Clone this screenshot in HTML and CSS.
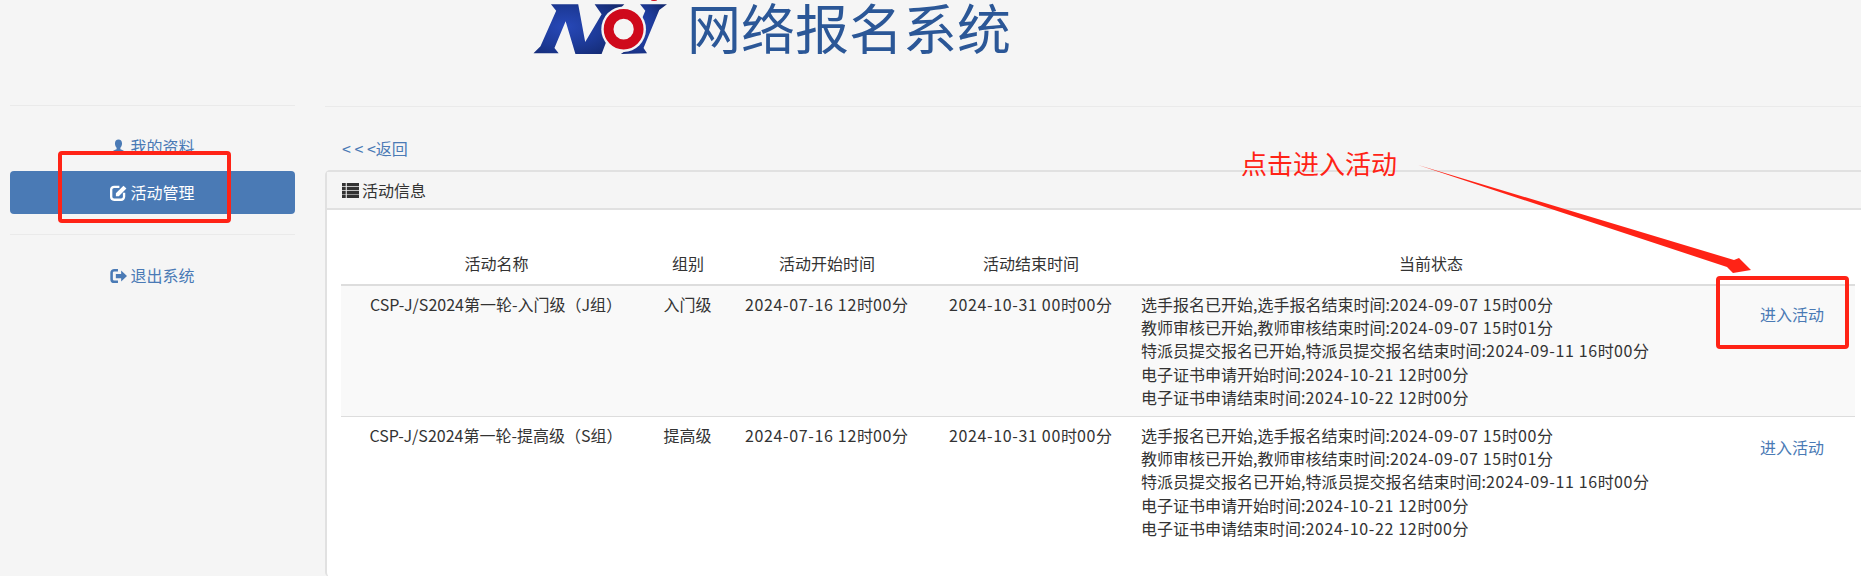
FILE: index.html
```html
<!DOCTYPE html>
<html lang="zh-CN">
<head>
<meta charset="utf-8">
<title>网络报名系统</title>
<link rel="stylesheet" href="styles.css">
</head>
<body>
<div class="app">
  <header class="header">
    <svg class="logo" viewBox="0 0 435 180" preserveAspectRatio="none" aria-label="NOI">
      <defs>
        <radialGradient id="blue" cx="0.35" cy="0.45" r="0.7">
          <stop offset="0" stop-color="#2748b8"/>
          <stop offset="0.55" stop-color="#1d3a98"/>
          <stop offset="1" stop-color="#142a72"/>
        </radialGradient>
      </defs>
      <polygon fill="url(#blue)" points="80,12 158,12 178,118 225,40 205,12 290,12 272,30 225,152 150,152 122,60 90,135 102,150 30,150 50,130 95,30"/>
      <polygon fill="url(#blue)" points="335,12 412,12 390,28 345,135 355,150 280,152 305,135 350,30"/>
      <circle cx="288" cy="82" r="64" fill="#f5f5f5"/>
      <circle cx="288" cy="82" r="43" fill="none" stroke="#cf0a1c" stroke-width="28"/>
      <ellipse cx="375" cy="0" rx="9" ry="3" fill="#cf0a1c"/>
    </svg>
    <h1 class="title">网络报名系统</h1>
  </header>

  <div class="layout">
    <aside class="sidebar">
      <hr class="rule">
      <nav class="nav nav-top">
        <a class="nav-item" href="#">
          <svg class="icon" viewBox="0 0 14 14.500"><path fill="currentColor" d="M7 0.500c2 0 3.200 1.500 3.200 3.600 0 1.600-.7 3-1.500 3.900v1.200c1.600.7 3.800 1.400 4.300 2.600.2.500.2 1.200.2 1.700H.8c0-.5 0-1.200.2-1.700.5-1.200 2.700-1.900 4.300-2.600V8c-.8-.9-1.500-2.300-1.500-3.900C3.800 2 5 .5 7 .5z"/></svg>
          <span>我的资料</span>
        </a>
        <a class="nav-item nav-active" href="#">
          <svg class="icon" viewBox="1 1.500 14.500 13.500"><path fill="none" stroke="currentColor" stroke-width="2" d="M9 3H4.500A2.500 2.500 0 0 0 2 5.500v6A2.500 2.500 0 0 0 4.500 14h6a2.500 2.500 0 0 0 2.500-2.500V8"/><path fill="currentColor" d="M6 8.500 12.500 2 15 4.500 8.500 11H6z"/></svg>
          <span>活动管理</span>
        </a>
      </nav>
      <hr class="rule rule-lower">
      <nav class="nav">
        <a class="nav-item" href="#">
          <svg class="icon" viewBox="0.500 1 16 14"><path fill="none" stroke="currentColor" stroke-width="2.400" d="M8 2.500H4.500a2.500 2.500 0 0 0-2.500 2.500v6a2.500 2.500 0 0 0 2.500 2.500H8"/><path fill="currentColor" d="M6 6h5V2.800L16.500 8 11 13.200V10H6z"/></svg>
          <span>退出系统</span>
        </a>
      </nav>
    </aside>

    <main class="main">
      <hr class="rule rule-main">
      <a class="back" href="#">&lt; &lt; &lt;返回</a>
      <section class="panel">
        <div class="panel-heading">
          <svg class="icon icon-dark" viewBox="0 0 16 14" preserveAspectRatio="none"><path fill="currentColor" d="M0 0h3.500v3H0zM4.500 0H16v3H4.500zM0 3.700h3.500v3H0zM4.500 3.700H16v3H4.500zM0 7.400h3.500v3H0zM4.500 7.400H16v3H4.500zM0 11h3.500v3H0zM4.500 11H16v3H4.500z"/></svg>
          <span>活动信息</span>
        </div>
        <div class="panel-body">
          <table class="table">
            <colgroup>
              <col class="c-name"><col class="c-group"><col class="c-start"><col class="c-end"><col class="c-state"><col class="c-action">
            </colgroup>
            <thead>
              <tr><th>活动名称</th><th>组别</th><th>活动开始时间</th><th>活动结束时间</th><th>当前状态</th><th></th></tr>
            </thead>
            <tbody>
              <tr class="row-odd">
                <td class="center">CSP-J/S2024第一轮-入门级（J组）</td>
                <td class="center">入门级</td>
                <td class="center"><span class="num">2024-07-16 12</span>时<span class="num">00</span>分</td>
                <td class="center"><span class="num">2024-10-31 00</span>时<span class="num">00</span>分</td>
                <td class="state">选手报名已开始,选手报名结束时间:<span class="num">2024-09-07 15</span>时<span class="num">00</span>分<br>教师审核已开始,教师审核结束时间:<span class="num">2024-09-07 15</span>时<span class="num">01</span>分<br>特派员提交报名已开始,特派员提交报名结束时间:<span class="num">2024-09-11 16</span>时<span class="num">00</span>分<br>电子证书申请开始时间:<span class="num">2024-10-21 12</span>时<span class="num">00</span>分<br>电子证书申请结束时间:<span class="num">2024-10-22 12</span>时<span class="num">00</span>分</td>
                <td class="action"><a href="#">进入活动</a></td>
              </tr>
              <tr class="row-even">
                <td class="center">CSP-J/S2024第一轮-提高级（S组）</td>
                <td class="center">提高级</td>
                <td class="center"><span class="num">2024-07-16 12</span>时<span class="num">00</span>分</td>
                <td class="center"><span class="num">2024-10-31 00</span>时<span class="num">00</span>分</td>
                <td class="state">选手报名已开始,选手报名结束时间:<span class="num">2024-09-07 15</span>时<span class="num">00</span>分<br>教师审核已开始,教师审核结束时间:<span class="num">2024-09-07 15</span>时<span class="num">01</span>分<br>特派员提交报名已开始,特派员提交报名结束时间:<span class="num">2024-09-11 16</span>时<span class="num">00</span>分<br>电子证书申请开始时间:<span class="num">2024-10-21 12</span>时<span class="num">00</span>分<br>电子证书申请结束时间:<span class="num">2024-10-22 12</span>时<span class="num">00</span>分</td>
                <td class="action"><a href="#">进入活动</a></td>
              </tr>
            </tbody>
          </table>
        </div>
      </section>
    </main>
  </div>

  <div class="mark mark-nav"></div>
  <div class="mark mark-enter"></div>
  <div class="callout">点击进入活动</div>
  <svg class="arrow" viewBox="1410 160 350 120"><polygon fill="#ff2316" points="1418,165 1734,260 1739,258 1751,270 1733,273 1727,267"/></svg>
</div>
</body>
</html>
```

FILE: styles.css
```css
* { box-sizing: border-box; }
html, body { margin: 0; height: 576px; overflow: hidden; }
body {
  background: #f5f5f5;
  color: #333;
  font-family: "Noto Sans CJK SC", "Liberation Sans", sans-serif;
  font-size: 16px;
  line-height: 23px;
}
a { color: #4a7ab5; text-decoration: none; }
.app { position: relative; width: 1861px; height: 576px; overflow: hidden; }

.header { height: 105px; display: flex; align-items: flex-start; padding-left: 523px; }
.logo { width: 152px; height: 64px; flex: none; }
.title {
  margin: 0 0 0 12px;
  font-size: 54px;
  line-height: 54px;
  font-weight: 400;
  color: #2b5797;
}

.layout { display: flex; gap: 30px; padding-left: 10px; }
.sidebar { width: 285px; flex: none; }
.main { flex: 1; margin-right: -10px; }
.rule { border: 0; border-top: 1px solid #eaeaea; margin: 0; }
.rule-lower { margin: 20px 0 19px; }
.rule-main { margin-top: 1px; }

.nav { display: flex; flex-direction: column; gap: 3px; }
.nav-top { margin-top: 19px; }
.nav-item {
  height: 43px;
  display: flex;
  align-items: center;
  justify-content: center;
  gap: 3px;
  border-radius: 4px;
}
.nav-active { background: #4a7ab5; color: #fff; }
.icon { width: 17px; height: 16px; flex: none; }
.icon-dark { color: #333; height: 15px; }

.back { display: block; margin: 30px 0 10px 17px; height: 23px; }

.panel { background: #fff; border: 2px solid #e1e1e1; border-radius: 5px; border-bottom: 0; height: 407px; }
.panel-heading {
  height: 38px;
  background: #f5f5f5;
  border-bottom: 2px solid #e1e1e1;
  padding-left: 15px;
  display: flex;
  align-items: center;
  gap: 3px;
}
.panel-body { padding: 42px 14px 0; }

.table { width: 1514px; border-collapse: collapse; table-layout: fixed; }
.c-name { width: 311px; }
.c-group { width: 72px; }
.c-start { width: 206px; }
.c-end { width: 202px; }
.c-state { width: 598px; }
.c-action { width: 125px; }
th { font-weight: 400; text-align: center; padding: 0 0 9px; border-bottom: 2px solid #ddd; }
td { padding: 7px 10px 7px 9px; vertical-align: top; }
.row-odd td { background: #f9f9f9; border-bottom: 1px solid #ddd; }
.center { text-align: center; }
.state { line-height: 23.200px; }
.num { letter-spacing: .65px; }
td.action { text-align: center; padding: 17px 1px 0 0; }
.row-even td.action { padding-top: 19px; }

.mark { position: absolute; border: 4px solid #ff2316; border-radius: 4px; }
.mark-nav { left: 58px; top: 151px; width: 173px; height: 72px; }
.mark-enter { left: 1716px; top: 276px; width: 133px; height: 73px; }
.callout { position: absolute; left: 1241px; top: 146px; font-size: 26px; line-height: 34px; color: #ff2316; }
.arrow { position: absolute; left: 1410px; top: 160px; width: 350px; height: 120px; }
```
